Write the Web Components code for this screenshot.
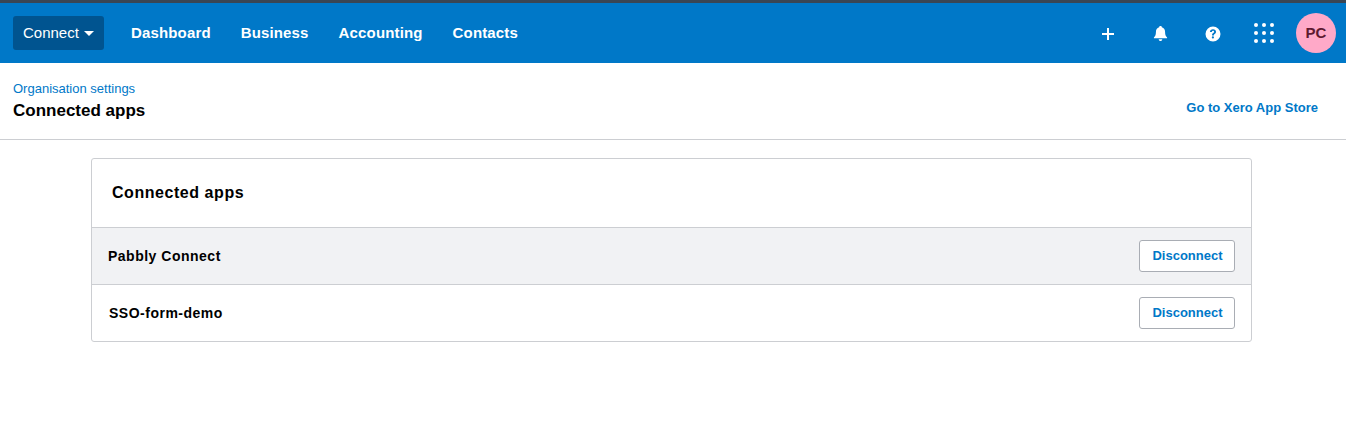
<!DOCTYPE html>
<html lang="en">
<head>
<meta charset="utf-8">
<title>Connected apps</title>
<style>
    html, body { margin: 0; padding: 0; background: #fff; }
    body { font-family: "Liberation Sans", Arial, sans-serif; color: #000; }
</style>
</head>
<body>
<xero-nav></xero-nav>
<page-head></page-head>
<apps-card>
    <app-row shaded name="Pabbly Connect" indent="16"></app-row>
    <app-row name="SSO-form-demo" indent="17"></app-row>
</apps-card>

<script>
class XeroNav extends HTMLElement {
    constructor() {
        super();
        this.attachShadow({ mode: 'open' });
    }

    connectedCallback() {
        this.shadowRoot.innerHTML = `
            <style>
                :host {
                    display: flex;
                    align-items: center;
                    height: 60px;
                    background: #0078c8;
                    border-top: 3px solid #3a4654;
                    padding: 0 10px 0 13px;
                    color: #fff;
                }
                .org {
                    display: flex;
                    align-items: center;
                    gap: 5px;
                    height: 34px;
                    width: 91px;
                    box-sizing: border-box;
                    padding-left: 10px;
                    background: #005490;
                    border-radius: 3px;
                    font-size: 15px;
                    margin-top: -1px;
                    margin-right: 27px;
                }
                .caret {
                    width: 0;
                    height: 0;
                    border-left: 5px solid transparent;
                    border-right: 5px solid transparent;
                    border-top: 5px solid #fff;
                    margin-top: 1px;
                }
                nav { display: flex; gap: 30px; margin-top: -1px; }
                nav a { font-size: 15px; font-weight: 700; letter-spacing: 0.15px; }
                .tools { margin-left: auto; display: flex; align-items: center; }
                .tool { width: 52px; height: 44px; display: flex; justify-content: center; align-items: center; }
                .plus { margin-top: 2px; }
                .bell { margin: 1px 0 0 1px; }
                .help { margin: 1px 0 0 1px; }
                .avatar {
                    width: 40px;
                    height: 40px;
                    border-radius: 50%;
                    background: #ffa9c8;
                    color: #5e1a30;
                    font-size: 15px;
                    font-weight: 700;
                    display: flex;
                    align-items: center;
                    justify-content: center;
                    margin-left: 6px;
                    margin-top: -1px;
                }
                svg { display: block; fill: #fff; }
            </style>
            <div class="org">Connect <span class="caret"></span></div>
            <nav>
                <a>Dashboard</a>
                <a>Business</a>
                <a>Accounting</a>
                <a>Contacts</a>
            </nav>
            <div class="tools">
                <div class="tool">
                    <svg class="plus" width="14" height="14" viewBox="0 0 14 14"><path d="M6 1h2v5h5v2H8v5H6V8H1V6h5z"/></svg>
                </div>
                <div class="tool">
                    <svg class="bell" width="17" height="17" viewBox="0 0 16 16"><path d="M8 1c.8 0 1.200.5 1.300 1.100C11.300 2.700 12.300 4.300 12.300 6.500c0 2.800.8 4 1.900 5.200v.8H1.800v-.8C2.900 10.500 3.700 9.300 3.700 6.500c0-2.200 1-3.800 3-4.400C6.800 1.500 7.200 1 8 1zM6.300 13.300h3.400C9.600 14.300 8.900 15 8 15s-1.600-.7-1.700-1.700z"/></svg>
                </div>
                <div class="tool">
                    <svg class="help" width="16" height="16" viewBox="0 0 16 16"><path fill-rule="evenodd" d="M8 .5a7.500 7.500 0 1 1 0 15 7.500 7.500 0 0 1 0-15zM8 3.300c-1.800 0-3 1-3.100 2.600h1.900c.1-.7.500-1.100 1.200-1.100.7 0 1.100.4 1.100 1 0 .5-.3.800-.9 1.200-.8.500-1.200 1-1.100 2.100v.4h1.800v-.3c0-.6.200-.9.900-1.300.8-.5 1.200-1.100 1.200-2.100 0-1.500-1.200-2.500-3-2.500zM7.900 10.300a1.100 1.100 0 1 0 0 2.200 1.100 1.100 0 0 0 0-2.200z"/></svg>
                </div>
                <div class="tool">
                    <svg width="22" height="22" viewBox="0 0 22 22">
                        <circle cx="3" cy="3" r="2"/><circle cx="11" cy="3" r="2"/><circle cx="19" cy="3" r="2"/>
                        <circle cx="3" cy="11" r="2"/><circle cx="11" cy="11" r="2"/><circle cx="19" cy="11" r="2"/>
                        <circle cx="3" cy="19" r="2"/><circle cx="11" cy="19" r="2"/><circle cx="19" cy="19" r="2"/>
                    </svg>
                </div>
                <div class="avatar">PC</div>
            </div>
        `;
    }
}

class PageHead extends HTMLElement {
    constructor() {
        super();
        this.attachShadow({ mode: 'open' });
    }

    connectedCallback() {
        this.shadowRoot.innerHTML = `
            <style>
                :host {
                    display: flex;
                    justify-content: space-between;
                    align-items: center;
                    height: 76px;
                    padding: 0 28px 0 13px;
                    border-bottom: 1px solid #ccced2;
                }
                .crumb { font-size: 13px; color: #0078c8; line-height: 14px; margin-bottom: 6px; }
                h1 { font-size: 17px; font-weight: 700; margin: 0; line-height: 18px; }
                a { font-size: 13px; font-weight: 700; color: #0078c8; margin-top: 12px; }
            </style>
            <div>
                <div class="crumb">Organisation settings</div>
                <h1>Connected apps</h1>
            </div>
            <a>Go to Xero App Store</a>
        `;
    }
}

class AppsCard extends HTMLElement {
    constructor() {
        super();
        this.attachShadow({ mode: 'open' });
    }

    connectedCallback() {
        this.shadowRoot.innerHTML = `
            <style>
                :host {
                    display: block;
                    width: 1159px;
                    margin: 18px 0 0 91px;
                    background: #fff;
                    border: 1px solid #ccced2;
                    border-radius: 3px;
                }
                h2 {
                    margin: 0;
                    height: 68px;
                    padding-left: 20px;
                    display: flex;
                    align-items: center;
                    font-size: 16px;
                    font-weight: 700;
                    letter-spacing: 0.55px;
                }
            </style>
            <h2>Connected apps</h2>
            <slot></slot>
        `;
    }
}

class AppRow extends HTMLElement {
    constructor() {
        super();
        this.attachShadow({ mode: 'open' });
    }

    connectedCallback() {
        const indent = this.getAttribute('indent') || 16;
        this.shadowRoot.innerHTML = `
            <style>
                :host {
                    display: flex;
                    align-items: center;
                    justify-content: space-between;
                    height: 56px;
                    border-top: 1px solid #ccced2;
                    padding: 0 16px 0 ${indent}px;
                    font-size: 14px;
                    font-weight: 700;
                    letter-spacing: 0.5px;
                }
                :host([shaded]) { background: #f1f2f4; }
                button {
                    width: 96px;
                    height: 32px;
                    padding: 0 0 2px 1px;
                    background: #fff;
                    border: 1px solid #a9adb4;
                    border-radius: 3px;
                    color: #0078c8;
                    font: 700 13px "Liberation Sans", Arial, sans-serif;
                }
            </style>
            <span>${this.getAttribute('name')}</span>
            <button>Disconnect</button>
        `;
    }
}

customElements.define('xero-nav', XeroNav);
customElements.define('page-head', PageHead);
customElements.define('apps-card', AppsCard);
customElements.define('app-row', AppRow);
</script>
</body>
</html>
